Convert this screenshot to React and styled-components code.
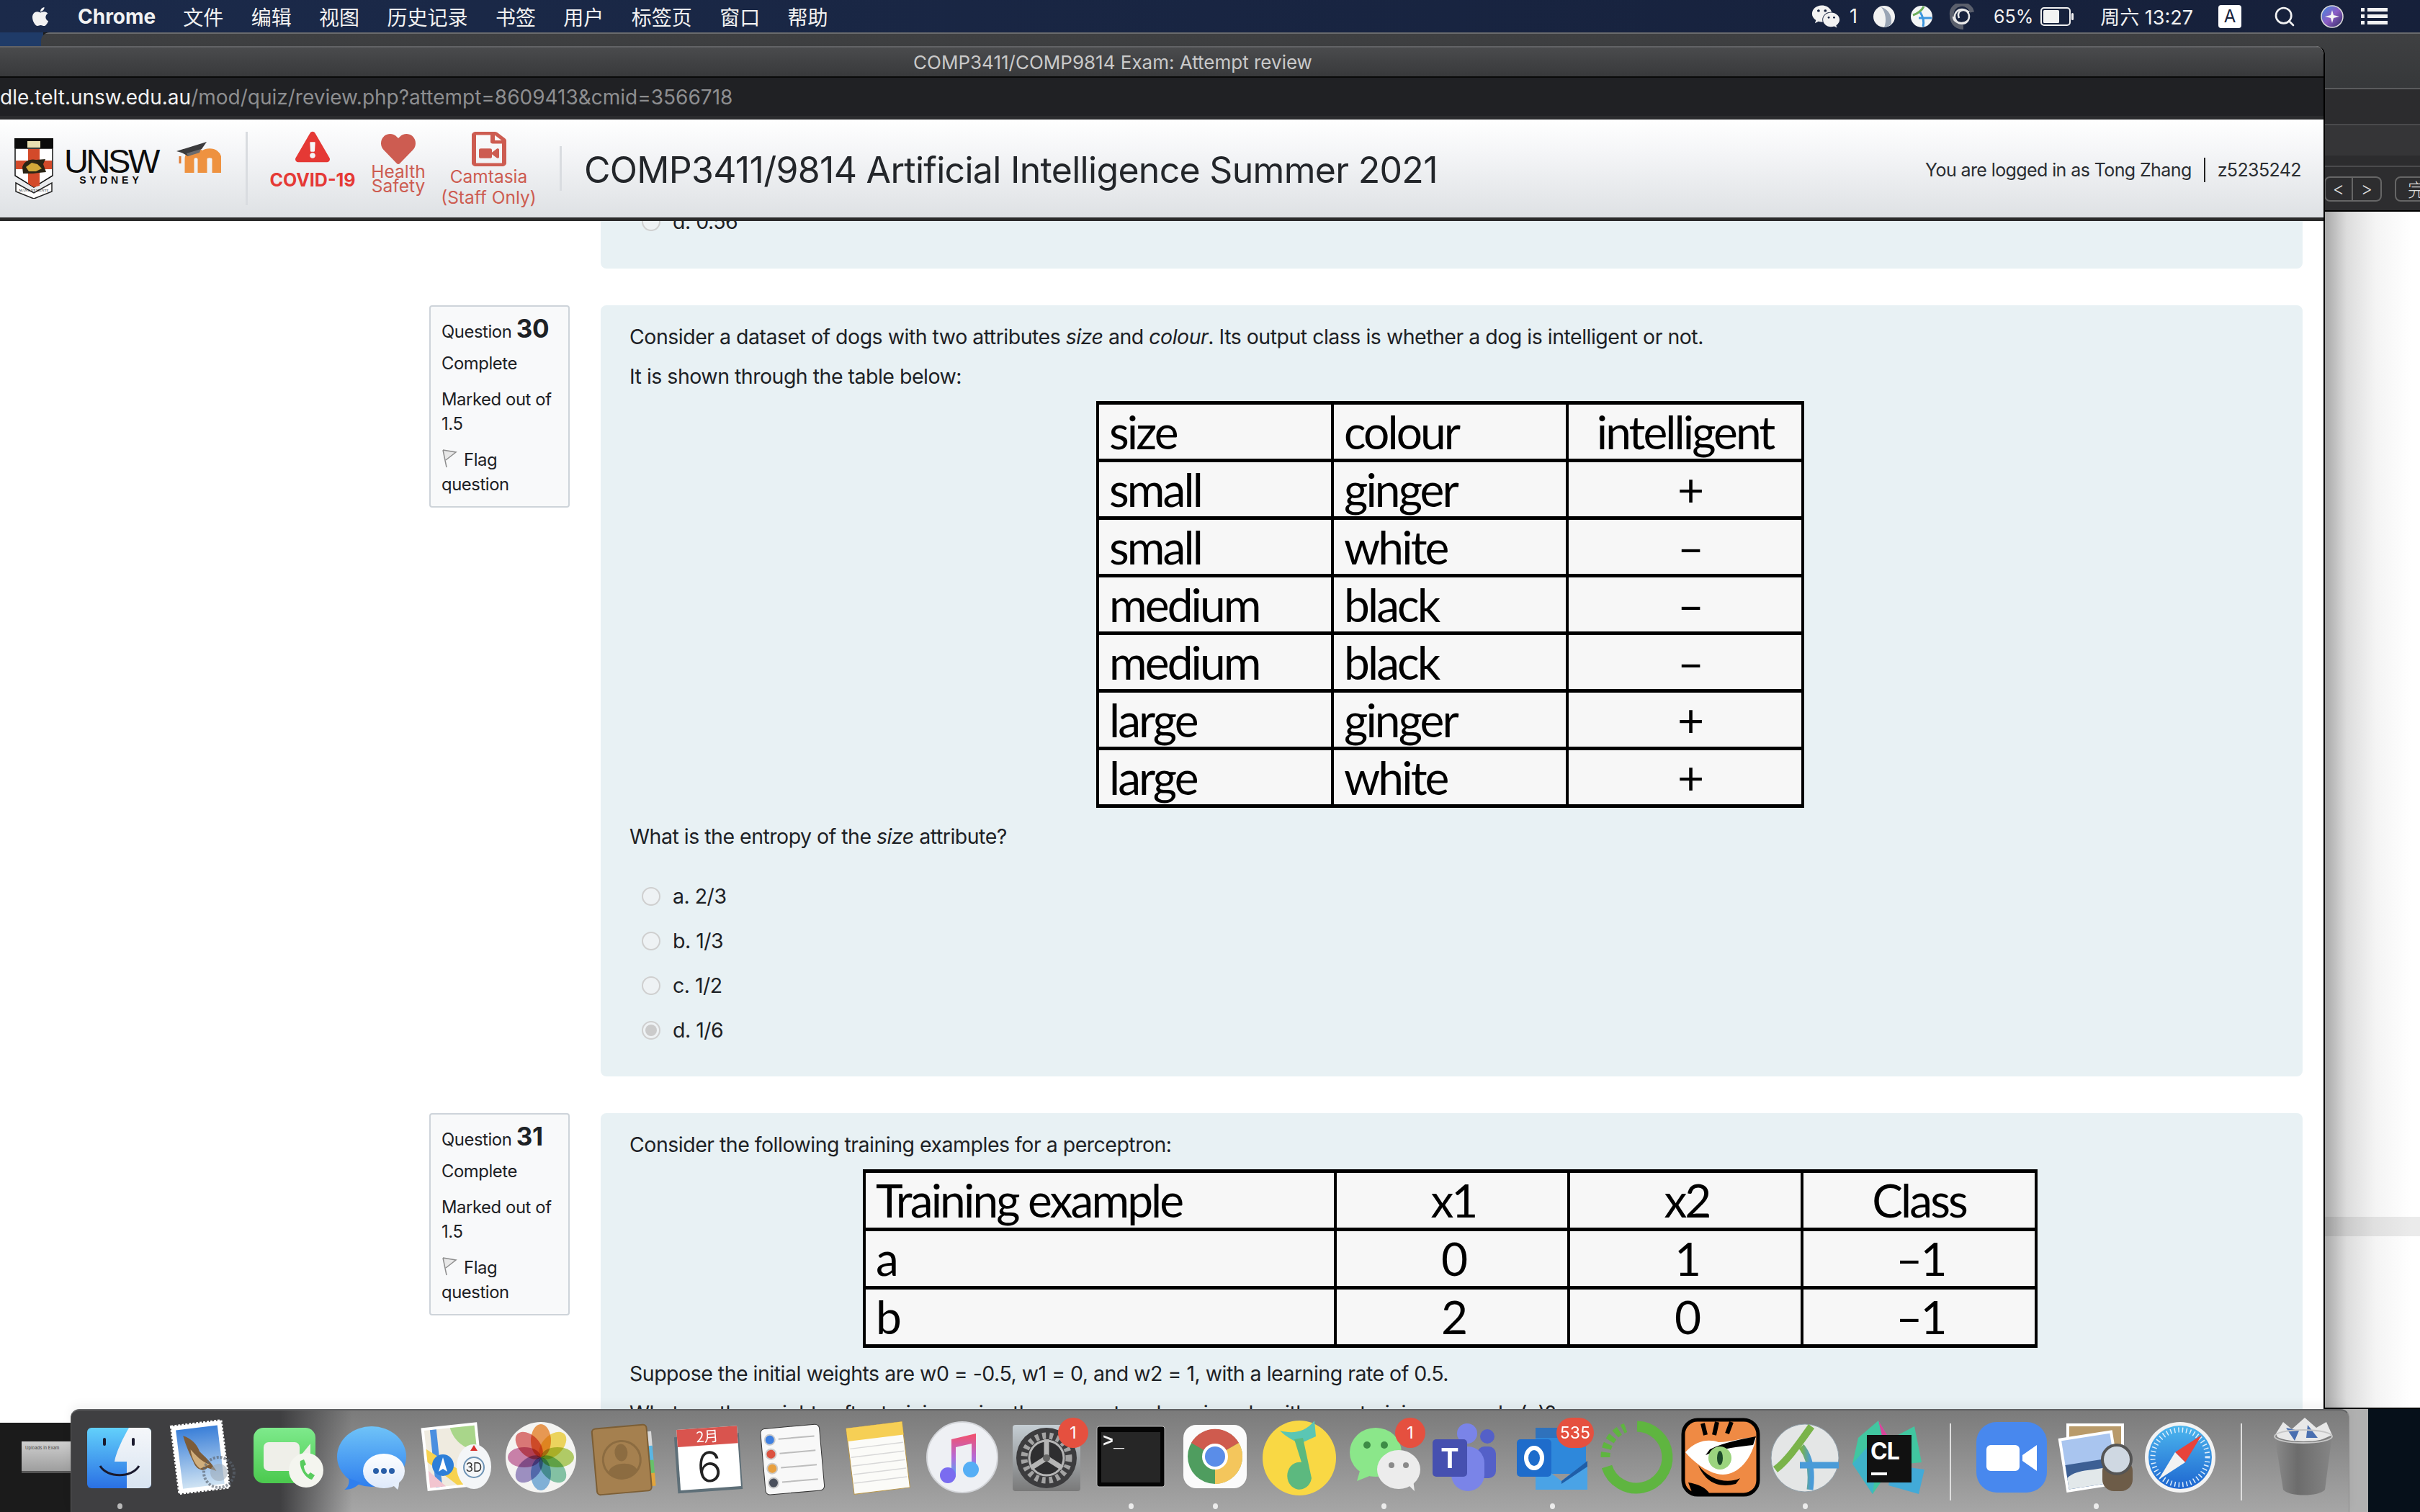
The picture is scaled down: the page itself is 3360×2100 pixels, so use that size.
import styled, { createGlobalStyle } from "styled-components";
import { FaApple, FaExclamationTriangle, FaHeart, FaRegFileVideo, FaWeixin } from "react-icons/fa";
import { FiSearch } from "react-icons/fi";

const PAGE_FONT = `Inter, "Noto Sans CJK SC", sans-serif`;

const GlobalStyle = createGlobalStyle`
  html, body { margin: 0; padding: 0; background: #06101a; }
  * { box-sizing: border-box; }
`;

const Screen = styled.div`
  position: relative;
  width: 3360px;
  height: 2100px;
  overflow: hidden;
  font-family: ${PAGE_FONT};
  background:
    linear-gradient(#1f3b68, #1f3b68) 0 45px / 60px 20px no-repeat,
    linear-gradient(90deg, #1b1b1b 0 98px, #b0b0b0 98px 3288px, #06101a 3288px);
`;

/* menu bar */
const MenuBar = styled.div`
  position: relative;
  z-index: 4;
  display: flex;
  align-items: center;
  height: 45px;
  padding: 0 45px 0 41px;
  background: linear-gradient(90deg, #1b2a4a, #16203a);
  color: #f2f2f2;
  font-size: 28px;
  font-family: Inter, "Noto Sans CJK SC", sans-serif;
`;

const AppName = styled.span`
  font-weight: 700;
  font-size: 28px;
  margin: 0 38px 0 37px;
`;

const MenuItem = styled.span`
  margin-right: 38.4px;
`;

const Tray = styled.div`
  display: flex;
  align-items: center;
  margin-left: auto;
`;

const TrayItem = styled.span`
  display: flex;
  align-items: center;
  margin-left: ${(p) => p.$ml || 0}px;
  font-size: ${(p) => p.$size || 26}px;
`;

const InputBadge = styled.span`
  display: flex;
  align-items: center;
  justify-content: center;
  width: 32px;
  height: 32px;
  margin-left: 35px;
  border-radius: 4px;
  background: #fff;
  color: #16203a;
  font-size: 24px;
`;

/* window behind */
const BackWindow = styled.div`
  position: absolute;
  left: 57px;
  top: 45px;
  right: 0;
  height: 1912px;
  display: flex;
  flex-direction: column;
  border-radius: 12px 0 0 0;
  overflow: hidden;
  border-bottom: 2px solid #000;
`;

const BackRow = styled.div`
  flex: none;
  height: ${(p) => p.$h}px;
  background: ${(p) => p.$bg};
  border-top: 2px solid ${(p) => p.$line || "transparent"};
`;

const BackToolbar = styled.div`
  flex: none;
  height: 64px;
  padding-left: 3170px;
  display: flex;
  align-items: center;
  background: #2d2d2f;
  border-top: 2px solid #4a4a4c;
  border-bottom: 2px solid #000;
`;

const Segment = styled.span`
  display: flex;
  align-items: center;
  justify-content: center;
  width: ${(p) => p.$w}px;
  height: 35px;
  border: 2px solid #666;
  border-left-width: ${(p) => (p.$joined ? 0 : 2)}px;
  border-radius: ${(p) => p.$radius};
  color: #ddd;
  font-size: 25px;
  font-weight: 300;
  flex: none;
`;

const DoneButton = styled(Segment)`
  margin-left: 18px;
  justify-content: flex-start;
  padding-left: 16px;
  white-space: nowrap;
`;

const BackPage = styled.div`
  position: relative;
  flex: 1;
  background: #fff linear-gradient(90deg, #a8a8a8 0, #dcdcdc 30px, #f4f4f4 70px, #fff 120px) right / 132px 100% no-repeat;
`;

const ShadeBand = styled.div`
  position: absolute;
  right: 0;
  width: 132px;
  top: 1396px;
  height: 27px;
  background: rgba(0, 0, 0, 0.08);
`;

/* main browser window */
const FrontWindow = styled.div`
  position: absolute;
  left: 0;
  top: 64px;
  width: 3228px;
  height: 1912px;
  display: flex;
  flex-direction: column;
  overflow: hidden;
  border-right: 2px solid #000;
  border-radius: 0 12px 0 0;
  background: #fff;
`;

const TitleBar = styled.div`
  flex: none;
  height: 44px;
  display: flex;
  align-items: center;
  justify-content: center;
  padding-right: 136px;
  background: linear-gradient(#4a4b4d, #38393b);
  border-top: 2px solid #626366;
  border-bottom: 2px solid #0a0a0a;
  color: #c9c9c9;
  font-size: 26px;
`;

const UrlBar = styled.div`
  flex: none;
  height: 58px;
  display: flex;
  align-items: center;
  background: #202124;
  border-bottom: 5px solid #2a2b2d;
  font-size: 28px;
  color: #8d8e90;
  white-space: nowrap;
`;

const UrlHost = styled.span`
  color: #f2f2f2;
`;

const PageHeader = styled.header`
  flex: none;
  height: 141px;
  display: flex;
  align-items: center;
  padding-left: 20px;
  padding-right: 31px;
  background: linear-gradient(#fff, #f4f5f7 35%, #dee1e4);
  border-bottom: 5px solid #2a2a2a;
`;

const WordMark = styled.div`
  display: flex;
  flex-direction: column;
  align-items: center;
  margin: -2px 0 0 14px;
  width: 132px;
  color: #0d0d0d;
  font-family: "Liberation Sans", sans-serif;
`;

const WordMarkMain = styled.span`
  font-size: 47px;
  line-height: 34px;
  letter-spacing: -3.4px;
`;

const WordMarkSub = styled.span`
  font-size: 14px;
  line-height: 18px;
  font-weight: 700;
  letter-spacing: 5px;
`;

const HeaderRule = styled.span`
  flex: none;
  width: 3px;
  height: ${(p) => p.$h}px;
  margin-left: ${(p) => p.$ml}px;
  background: #d9dce0;
`;

const HeaderLink = styled.a`
  flex: none;
  align-self: flex-start;
  display: flex;
  flex-direction: column;
  align-items: center;
  width: ${(p) => p.$w}px;
  margin: 17px 0 0 ${(p) => p.$ml}px;
  color: ${(p) => p.$color};
  font-size: ${(p) => p.$size}px;
  font-weight: ${(p) => p.$weight || 400};
  line-height: ${(p) => p.$lh}px;
  text-align: center;
  white-space: nowrap;
`;

const CovidIcon = styled(FaExclamationTriangle)`
  margin-top: -3px;
`;

const HeartIcon = styled(FaHeart)`
  margin-bottom: -3px;
`;

const CovidLabel = styled.span`
  margin-top: 7px;
`;

const HeadingTitle = styled.h1`
  margin: 4px 0 0 31px;
  font-size: 50px;
  font-weight: 400;
  letter-spacing: -0.7px;
  color: #23262a;
  white-space: nowrap;
`;

const UserMenu = styled.div`
  margin: 4px 0 0 auto;
  display: flex;
  align-items: center;
  font-size: 25px;
  letter-spacing: -0.6px;
  color: #2a2d31;
`;

const UserRule = styled.span`
  width: 2px;
  height: 34px;
  margin: 0 17px;
  background: #222;
`;

/* page body */
const ScrollArea = styled.main`
  flex: 1;
  overflow: hidden;
  padding-right: 29px;
  color: #1d2125;
  font-size: 28.5px;
  letter-spacing: -0.5px;
  line-height: 45px;
`;

const QuestionRow = styled.section`
  display: flex;
  align-items: flex-start;
  gap: 43px;
  padding-left: 596px;
  margin: ${(p) => p.$margin};
`;

const InfoBox = styled.aside`
  flex: none;
  width: 195px;
  height: 281px;
  padding: 13px 15px;
  background: #f8f9fa;
  border: 2px solid #ced4da;
  border-radius: 4px;
  font-size: 23.8px;
  letter-spacing: -0.4px;
  line-height: 34px;
`;

const InfoSpacer = styled.div`
  flex: none;
  width: 195px;
`;

const InfoNumberLine = styled.div`
  height: 49px;
  white-space: nowrap;
`;

const InfoNumber = styled.b`
  font-size: 35px;
  font-weight: 700;
`;

const InfoLine = styled.div`
  margin-bottom: ${(p) => p.$mb || 0}px;
  white-space: nowrap;
`;

const FlagMark = styled.svg`
  width: 22px;
  height: 26px;
  margin-right: 9px;
  vertical-align: -3px;
`;

const QuestionPanel = styled.div`
  flex: 1;
  height: ${(p) => p.$h}px;
  padding: ${(p) => p.$top ?? 21}px 44px 0 40px;
  background: #e8f1f4;
  border-radius: 8px;
  overflow: hidden;
`;

const Para = styled.p`
  margin: ${(p) => p.$mt || 0}px 0 0;
  white-space: nowrap;
`;

const Sheet = styled.table`
  border-collapse: collapse;
  table-layout: fixed;
  margin: 12px auto ${(p) => p.$mb}px;
  width: ${(p) => p.$w}px;
  background: #f7f7f7;
  color: #000;
  font-family: Lato, sans-serif;
  font-size: 64px;
  letter-spacing: -2.9px;
`;

const SheetCol = styled.col`
  width: ${(p) => p.$w}px;
`;

const Cell = styled.td`
  height: ${(p) => p.$h}px;
  padding: 0 0 0 ${(p) => p.$pad}px;
  border-top: 5px solid #000;
  border-bottom: 5px solid #000;
  border-left: 4px solid #000;
  border-right: 4px solid #000;
  line-height: 60px;
  text-align: ${(p) => (p.$center ? "center" : "left")};
`;

const Options = styled.div`
  margin: ${(p) => p.$mt}px 0 0 17px;
  display: flex;
  flex-direction: column;
  gap: 17px;
`;

const Option = styled.label`
  display: flex;
  align-items: center;
  gap: 17px;
`;

const Radio = styled.span`
  position: relative;
  flex: none;
  width: 26px;
  height: 26px;
  border-radius: 50%;
  border: 2px solid #cfcfcf;
  background: #eef2f4;
  &::after {
    content: "";
    display: ${(p) => (p.$checked ? "block" : "none")};
    position: absolute;
    inset: 3px;
    border-radius: 50%;
    background: #cbcbcb;
  }
`;

/* dock */
const Dock = styled.nav`
  position: absolute;
  z-index: 5;
  left: 98px;
  top: 1957px;
  width: 3164px;
  height: 143px;
  padding-left: 8px;
  display: flex;
  border-top: 2px solid #5f6062;
  border-left: 1px solid #5a5a5a;
  border-right: 1px solid #8a8a8a;
  border-radius: 12px 12px 0 0;
  box-shadow: 0 -6px 14px rgba(0, 0, 0, 0.05);
  background:
    linear-gradient(90deg, #3f3f41 0, #3f3f41 290px, rgba(70, 70, 72, 0) 390px),
    linear-gradient(#7b7b7b, #a6a6a6);
`;

const DockSlot = styled.div`
  position: relative;
  flex: none;
  width: 117px;
  padding-top: 10px;
  display: flex;
  justify-content: center;
`;

const DockSeparator = styled.div`
  flex: none;
  width: 53px;
  display: flex;
  justify-content: center;
  padding: 18px 0 16px;
  &::before {
    content: "";
    width: 2px;
    background: #dedede;
  }
`;

const RunDot = styled.span`
  position: absolute;
  left: 50%;
  bottom: 4px;
  width: 7px;
  height: 8px;
  margin-left: -3px;
  border-radius: 50%;
  background: ${(p) => (p.$dim ? "#b9b9b9" : "#ececec")};
`;

const CountBadge = styled.span`
  position: absolute;
  right: 0;
  top: 10px;
  min-width: 42px;
  height: 42px;
  padding: 0 5px;
  display: flex;
  align-items: center;
  justify-content: center;
  border-radius: 21px;
  background: #e5503f;
  color: #fff;
  font-size: 23px;
`;

const ScreenThumb = styled.div`
  position: absolute;
  left: 30px;
  top: 2002px;
  width: 68px;
  height: 44px;
  background: linear-gradient(#cfcfcf, #9e9e9e);
  border-bottom: 3px solid #555;
  color: #444;
  font-size: 6px;
  line-height: 7px;
  padding: 5px;
  overflow: hidden;
`;

const IconSvg = styled.svg.attrs({ viewBox: "0 0 110 110" })`
  width: 110px;
  height: 110px;
  display: block;
`;

/* dock icons */
const FinderIcon = () => (
  <IconSvg>
    <defs>
      <linearGradient id="fb" x1="0" y1="0" x2="0" y2="1"><stop offset="0" stopColor="#62d0fb" /><stop offset="1" stopColor="#2a70e4" /></linearGradient>
      <linearGradient id="fw" x1="0" y1="0" x2="0" y2="1"><stop offset="0" stopColor="#f5f7fa" /><stop offset="1" stopColor="#d8e4f1" /></linearGradient>
    </defs>
    <rect x="10" y="14" width="89" height="84" rx="6" fill="url(#fb)" />
    <path d="M68 14C60 28 50 48 48 61H65V98H93a6 6 0 0 0 6-6V20a6 6 0 0 0-6-6Z" fill="url(#fw)" />
    <rect x="32" y="28" width="4" height="11" rx="2" fill="#1a1a2e" />
    <rect x="72" y="28" width="4" height="11" rx="2" fill="#1a1a2e" />
    <path d="M28 67C38 84 72 84 82 67" stroke="#1a1a2e" strokeWidth="3" fill="none" />
  </IconSvg>
);

const MailIcon = () => (
  <IconSvg>
    <defs>
      <linearGradient id="ms" x1="0" y1="0" x2="0" y2="1"><stop offset="0" stopColor="#3a7fd8" /><stop offset="1" stopColor="#cfe3f3" /></linearGradient>
    </defs>
    <g transform="rotate(-7 55 55)">
      <rect x="15" y="7" width="70" height="94" fill="#fff" stroke="#fff" strokeWidth="3" strokeDasharray="3 2" />
      <rect x="21" y="13" width="58" height="82" fill="url(#ms)" />
      <path d="M30 22C40 26 48 36 50 46C56 54 64 62 70 76L58 70C52 76 42 70 40 60C36 48 32 36 30 22Z" fill="#7d5c38" />
      <path d="M38 42C44 50 50 60 62 66L48 70C42 64 38 54 38 42Z" fill="#d0ae7c" />
    </g>
    <circle cx="76" cy="76" r="21" fill="none" stroke="#5a6470" strokeWidth="4" strokeDasharray="3 2" opacity="0.65" />
    <circle cx="76" cy="76" r="12" fill="#9aa7b5" opacity="0.55" />
  </IconSvg>
);

const FaceTimeIcon = () => (
  <IconSvg>
    <defs>
      <linearGradient id="ft" x1="0" y1="0" x2="0" y2="1"><stop offset="0" stopColor="#7eea8c" /><stop offset="1" stopColor="#4bc94e" /></linearGradient>
    </defs>
    <rect x="7" y="14" width="86" height="77" rx="14" fill="url(#ft)" />
    <rect x="21" y="34" width="50" height="40" rx="7" fill="#efefe9" />
    <path d="M73 52L86 36V70Z" fill="#efefe9" />
    <ellipse cx="80" cy="73" rx="24" ry="24" fill="#f4f5ef" />
    <path d="M72 60C70 68 78 84 88 86L92 80L86 76L83 79C79 76 77 71 77 67L80 65L77 58Z" fill="#58cc5e" />
  </IconSvg>
);

const MessagesIcon = () => (
  <IconSvg>
    <defs>
      <linearGradient id="mg" x1="0" y1="0" x2="0" y2="1"><stop offset="0" stopColor="#6fc3f8" /><stop offset="1" stopColor="#2f7fee" /></linearGradient>
      <linearGradient id="mw" x1="0" y1="0" x2="0" y2="1"><stop offset="0" stopColor="#fdfeff" /><stop offset="1" stopColor="#dfeafb" /></linearGradient>
    </defs>
    <ellipse cx="54" cy="54" rx="48" ry="42" fill="url(#mg)" />
    <path d="M22 84C24 92 20 98 16 100C26 100 34 96 38 90Z" fill="#2f7fee" />
    <ellipse cx="71" cy="74" rx="29" ry="24" fill="url(#mw)" />
    <path d="M82 92C86 96 88 98 90 100C92 96 92 92 92 88Z" fill="#e6effb" />
    <circle cx="60" cy="74" r="4" fill="#2a5fa8" />
    <circle cx="71" cy="74" r="4" fill="#2a5fa8" />
    <circle cx="82" cy="74" r="4" fill="#2a5fa8" />
  </IconSvg>
);

const MapsIcon = () => (
  <IconSvg>
    <g transform="rotate(-6 50 55)">
      <rect x="10" y="10" width="78" height="88" fill="#fff" />
      <rect x="14" y="14" width="70" height="80" fill="#efebe0" />
      <path d="M50 14H84V48C68 46 54 34 50 14Z" fill="#a9d68a" />
      <path d="M22 14H31V94H22Z" fill="#4a8fe0" />
      <path d="M14 40L60 76V94H52L14 58Z" fill="#f7d24f" />
      <path d="M14 70L36 94H14Z" fill="#f2c4cf" />
    </g>
    <circle cx="36" cy="66" r="15" fill="#2d7fd8" />
    <path d="M36 55L42 75L36 71L30 75Z" fill="#fff" />
    <ellipse cx="79" cy="68" rx="24" ry="31" fill="#f4f6f8" />
    <circle cx="79" cy="69" r="14" fill="none" stroke="#6d93b5" strokeWidth="2" />
    <path d="M79 38L84 46H74Z" fill="#d8322c" />
    <text x="79" y="75" fontSize="17" textAnchor="middle" fill="#333" fontFamily="Inter, sans-serif">3D</text>
  </IconSvg>
);

const PETALS = ["#f08a30", "#f4d63f", "#a9c94a", "#6fbf9a", "#6ba8dc", "#8f7fc0", "#c76ba0", "#dd5f5f"];

const PhotosIcon = () => (
  <IconSvg>
    <circle cx="55" cy="55" r="49" fill="#f4f4f2" />
    {PETALS.map((c, i) => (
      <ellipse key={c} cx="55" cy="32" rx="14" ry="23" fill={c} opacity="0.82" style={{ mixBlendMode: "multiply" }} transform={`rotate(${i * 45} 55 55)`} />
    ))}
  </IconSvg>
);

const ContactsIcon = () => (
  <IconSvg>
    <g transform="rotate(-5 55 55)">
      <rect x="86" y="22" width="8" height="22" fill="#d8d8d8" />
      <rect x="86" y="42" width="8" height="22" fill="#5ab6e4" />
      <rect x="86" y="62" width="8" height="20" fill="#67c16b" />
      <rect x="86" y="80" width="8" height="18" fill="#e2a53c" />
      <rect x="12" y="12" width="76" height="92" rx="5" fill="#a5804f" stroke="#7c5e35" strokeWidth="2" />
      <circle cx="50" cy="58" r="26" fill="none" stroke="#8c6c41" strokeWidth="3" />
      <ellipse cx="50" cy="48" rx="9" ry="12" fill="#8c6c41" />
      <path d="M30 74C34 60 66 60 70 74C62 86 38 86 30 74Z" fill="#8c6c41" />
    </g>
  </IconSvg>
);

const CalendarIcon = () => (
  <IconSvg>
    <g transform="rotate(-4 55 55)">
      <rect x="8" y="24" width="90" height="78" fill="#5e6f78" />
      <rect x="12" y="14" width="84" height="84" fill="#fff" />
      <rect x="12" y="14" width="84" height="24" fill="#d9544e" />
      <text x="54" y="33" fontSize="20" textAnchor="middle" fill="#fff" fontFamily="'Noto Sans CJK SC', sans-serif">2月</text>
      <text x="54" y="89" fontSize="58" textAnchor="middle" fill="#222" fontFamily="Inter, sans-serif" fontWeight="300">6</text>
    </g>
  </IconSvg>
);

const ReminderLine = ({ y, color }) => (
  <>
    <circle cx="24" cy={y} r="7" fill={color} stroke="#ccc" strokeWidth="2" />
    <rect x="36" y={y - 1} width="50" height="2" fill="#bdbdbd" />
  </>
);

const RemindersIcon = () => (
  <IconSvg>
    <g transform="rotate(-5 55 55)">
      <rect x="12" y="12" width="82" height="92" rx="6" fill="#f8f8f8" stroke="#333" strokeWidth="1" />
      <ReminderLine y="28" color="#3e7fe0" />
      <ReminderLine y="48" color="#dc5240" />
      <ReminderLine y="68" color="#e8a040" />
      <ReminderLine y="88" color="#4a505c" />
    </g>
  </IconSvg>
);

const NotesIcon = () => (
  <IconSvg>
    <g transform="rotate(-7 55 55)">
      <rect x="16" y="10" width="78" height="92" fill="#fbfbf8" stroke="#b8964a" strokeWidth="1" />
      <rect x="16" y="10" width="78" height="18" fill="#f6cf55" />
      {[38, 50, 62, 74, 86].map((y) => (
        <rect key={y} x="18" y={y} width="74" height="1.5" fill="#d8d8d8" />
      ))}
    </g>
  </IconSvg>
);

const MusicIcon = () => (
  <IconSvg>
    <defs>
      <linearGradient id="mu" x1="0" y1="0" x2="0" y2="1"><stop offset="0" stopColor="#f4506a" /><stop offset="0.55" stopColor="#b46ad8" /><stop offset="1" stopColor="#4fa8f5" /></linearGradient>
    </defs>
    <circle cx="55" cy="55" r="49" fill="#eef0f4" stroke="#d2d4d8" strokeWidth="2" />
    <path d="M40 30L74 22V72H68V36L46 41V82H40Z" fill="url(#mu)" />
    <ellipse cx="35" cy="80" rx="11" ry="11" fill="#7a6cf0" />
    <ellipse cx="67" cy="72" rx="11" ry="11" fill="#55aef5" />
  </IconSvg>
);

const SystemIcon = () => (
  <IconSvg>
    <defs>
      <linearGradient id="sy" x1="0" y1="0" x2="0" y2="1"><stop offset="0" stopColor="#c5ced4" /><stop offset="1" stopColor="#797979" /></linearGradient>
    </defs>
    <rect x="8" y="10" width="94" height="92" rx="4" fill="url(#sy)" />
    <circle cx="55" cy="56" r="42" fill="#3c3c3e" />
    <circle cx="55" cy="56" r="31" fill="none" stroke="#a3a3a3" strokeWidth="9" strokeDasharray="5 5" />
    <circle cx="55" cy="56" r="24" fill="#2e2e30" stroke="#b5b5b5" strokeWidth="3" />
    <path d="M55 56V30M55 56L33 70M55 56L77 70" stroke="#b5b5b5" strokeWidth="7" />
    <circle cx="55" cy="56" r="5" fill="#666" />
  </IconSvg>
);

const TerminalIcon = () => (
  <IconSvg>
    <rect x="8" y="12" width="94" height="84" rx="3" fill="#050505" stroke="#b9b9b9" strokeWidth="1" />
    <rect x="14" y="20" width="82" height="70" fill="#262626" />
    <text x="16" y="40" fontSize="25" fontWeight="700" fill="#f2f2f2" fontFamily="Liberation Mono, monospace">&gt;_</text>
  </IconSvg>
);

const ChromeIcon = () => (
  <IconSvg>
    <rect x="6" y="10" width="88" height="88" rx="18" transform="translate(5 0)" fill="#fbfbfb" />
    <circle cx="55" cy="54" r="38" fill="#4f9d5f" />
    <path d="M55 54L88 35A38 38 0 0 0 22 35Z" fill="#cf5b4e" />
    <path d="M55 54L88 35A38 38 0 0 1 55 92Z" fill="#f4c65c" />
    <circle cx="55" cy="54" r="18" fill="#fff" />
    <circle cx="55" cy="54" r="14" fill="#5a8de8" />
  </IconSvg>
);

const QQMusicIcon = () => (
  <IconSvg>
    <ellipse cx="55" cy="56" rx="51" ry="52" fill="#f9d844" />
    <path d="M28 18C44 22 62 22 76 4L78 26L56 36C48 32 38 28 28 18Z" fill="#5ac6b4" />
    <path d="M48 30L60 28L72 84A17 19 0 1 1 58 62Z" fill="#5cb97f" />
  </IconSvg>
);

const WeChatIcon = () => (
  <IconSvg>
    <ellipse cx="44" cy="48" rx="36" ry="34" fill="#8be78a" />
    <path d="M22 74L18 88L38 80Z" fill="#8be78a" />
    <circle cx="32" cy="38" r="5" fill="#3d8c46" />
    <circle cx="56" cy="38" r="5" fill="#3d8c46" />
    <ellipse cx="76" cy="72" rx="30" ry="27" fill="#ececec" />
    <path d="M88 92L98 102L96 86Z" fill="#ececec" />
    <circle cx="66" cy="66" r="4" fill="#8a8a8a" />
    <circle cx="86" cy="66" r="4" fill="#8a8a8a" />
  </IconSvg>
);

const TeamsIcon = () => (
  <IconSvg>
    <circle cx="54" cy="22" r="14" fill="#7a84e8" />
    <circle cx="82" cy="26" r="10" fill="#5460c8" />
    <rect x="68" y="40" width="26" height="44" rx="10" fill="#5460c8" />
    <rect x="32" y="40" width="46" height="62" rx="23" fill="#7a84e8" />
    <rect x="6" y="30" width="48" height="52" rx="5" fill="#4650b0" />
    <text x="30" y="70" fontSize="38" fontWeight="700" textAnchor="middle" fill="#fff" fontFamily="Inter, sans-serif">T</text>
  </IconSvg>
);

const OutlookIcon = () => (
  <IconSvg>
    <rect x="32" y="14" width="44" height="40" fill="#1f6fc4" />
    <rect x="32" y="14" width="70" height="14" fill="#2f72bc" />
    <rect x="32" y="28" width="70" height="50" fill="#2e88db" />
    <path d="M32 60L68 88L104 60V100H32Z" fill="#4aa3e6" />
    <path d="M68 88L104 60V68L68 92Z" fill="#1f5ea8" />
    <rect x="6" y="30" width="48" height="52" rx="5" fill="#1e6ccb" />
    <ellipse cx="30" cy="56" rx="11" ry="14" fill="none" stroke="#fff" strokeWidth="6" />
  </IconSvg>
);

const RingIcon = () => (
  <IconSvg>
    <path d="M56 12A43 43 0 1 1 14 68" fill="none" stroke="#5fb540" strokeWidth="15" />
    <path d="M12 55A43 43 0 0 1 40 14" fill="none" stroke="#5fb540" strokeWidth="13" strokeDasharray="7 5" />
  </IconSvg>
);

const TigerIcon = () => (
  <IconSvg>
    <rect x="3" y="3" width="104" height="104" rx="20" fill="#ef8a44" stroke="#000" strokeWidth="5" />
    <path d="M6 48C22 30 40 30 52 34C72 34 88 26 104 28C98 60 76 84 50 78C34 74 18 62 6 48Z" fill="#fff" />
    <path d="M30 8L34 24M50 6L46 24M70 6L64 22" stroke="#000" strokeWidth="6" />
    <path d="M104 26C84 30 60 34 40 44L34 52C58 42 82 40 100 38Z" fill="#000" />
    <circle cx="54" cy="56" r="16" fill="#9bd47e" />
    <ellipse cx="54" cy="56" rx="4" ry="10" fill="#1c4a2a" />
    <path d="M24 66C40 88 66 92 82 84L76 92C52 98 34 90 24 66ZM10 90C22 92 34 96 40 106H16Z" fill="#000" />
  </IconSvg>
);

const AnyConnectIcon = () => (
  <IconSvg>
    <defs>
      <linearGradient id="ac" x1="0" y1="0" x2="1" y2="0"><stop offset="0" stopColor="#7ab34a" /><stop offset="1" stopColor="#4a9bd8" /></linearGradient>
    </defs>
    <circle cx="55" cy="56" r="47" fill="#e4e6e6" stroke="#8f9ea8" strokeWidth="1" />
    <path d="M14 72C30 60 44 40 64 12" fill="none" stroke="#7ab34a" strokeWidth="10" />
    <path d="M50 40C60 52 66 70 62 100" fill="none" stroke="url(#ac)" strokeWidth="9" />
    <path d="M48 66H102" stroke="#4a9bd8" strokeWidth="9" />
  </IconSvg>
);

const CLionIcon = () => (
  <IconSvg>
    <path d="M4 64L12 28L40 4L56 30L90 12L100 62L60 66L32 106Z" fill="#41c6a0" />
    <path d="M40 4L56 30L48 38Z" fill="#d9459b" />
    <path d="M4 64L34 30V90L32 106Z" fill="#3fb3c9" />
    <path d="M60 66L104 72L96 106L54 94Z" fill="#42aad8" />
    <rect x="24" y="24" width="62" height="66" fill="#111" />
    <text x="29" y="58" fontSize="32" fontWeight="700" fill="#fff" fontFamily="Inter, sans-serif" letterSpacing="-1">CL</text>
    <rect x="30" y="76" width="22" height="4" fill="#fff" />
  </IconSvg>
);

const ZoomIcon = () => (
  <IconSvg>
    <rect x="6" y="6" width="98" height="98" rx="28" fill="#4888ee" />
    <rect x="20" y="38" width="46" height="36" rx="6" fill="#fff" />
    <path d="M70 52L90 38V74L70 60Z" fill="#fff" />
  </IconSvg>
);

const PreviewIcon = () => (
  <IconSvg>
    <rect x="14" y="8" width="80" height="84" fill="#fff" />
    <rect x="18" y="12" width="72" height="70" fill="#b89a6a" />
    <g transform="rotate(-9 50 60)">
      <rect x="8" y="22" width="76" height="76" fill="#fff" />
      <rect x="12" y="26" width="68" height="68" fill="#a9c5ef" />
      <path d="M12 60H80V94H12Z" fill="#3c5f94" />
      <path d="M12 78C30 66 50 76 80 70V94H12Z" fill="#e2e8ea" />
    </g>
    <rect x="64" y="58" width="42" height="44" rx="16" fill="#6d5c48" />
    <circle cx="84" cy="58" r="20" fill="#cfd8e2" stroke="#555" strokeWidth="4" />
  </IconSvg>
);

const SafariIcon = () => (
  <IconSvg>
    <defs>
      <linearGradient id="sf" x1="0" y1="0" x2="0" y2="1"><stop offset="0" stopColor="#4cb6ee" /><stop offset="1" stopColor="#1e66d0" /></linearGradient>
    </defs>
    <circle cx="55" cy="55" r="49" fill="#f3f3f3" />
    <circle cx="55" cy="55" r="44" fill="url(#sf)" />
    <circle cx="55" cy="55" r="38" fill="none" stroke="#dfeefb" strokeWidth="7" strokeDasharray="1.5 4" />
    <path d="M85 24L48 48L62 62Z" fill="#e8433a" />
    <path d="M25 86L48 48L62 62Z" fill="#f2f2f2" />
  </IconSvg>
);

const TrashIcon = () => (
  <IconSvg>
    <defs>
      <linearGradient id="tr" x1="0" y1="0" x2="1" y2="0"><stop offset="0" stopColor="#8a8a8a" /><stop offset="0.4" stopColor="#6c6c6c" /><stop offset="1" stopColor="#858585" /></linearGradient>
    </defs>
    <path d="M18 22L28 6L40 16L58 0L74 14L88 6L96 24L60 40L24 36Z" fill="#e8e8e8" />
    <path d="M32 14L44 32L50 18ZM62 10L76 28L60 28Z" fill="#4a6fb0" />
    <path d="M16 24C28 36 84 36 96 24L86 100C78 110 36 110 28 100Z" fill="url(#tr)" />
    <ellipse cx="56" cy="26" rx="40" ry="9" fill="none" stroke="#c6c6c6" strokeWidth="2" />
  </IconSvg>
);

const CrestMark = () => (
  <svg width="54" height="84" viewBox="0 0 54 84" style={{ flex: "none" }}>
    <rect x="0" y="0" width="54" height="14" fill="#0b0b0b" />
    <rect x="18" y="4" width="18" height="9" fill="#e8dfb0" />
    <path d="M1 14H53V52L27 68L1 52Z" fill="#fff" stroke="#111" strokeWidth="1.5" />
    <path d="M19 15H35V31H52V43H35V66L27 68L19 63V43H2V31H19Z" fill="#d34a2a" />
    <path d="M11 40C13 32 22 28 30 30L43 29L40 36L44 47L34 48L26 49L12 49Z" fill="#2a2415" />
    <path d="M16 40L24 34L32 36L38 42L30 46L20 46Z" fill="#d2a93a" />
    <path d="M2 62L27 76L52 62L52 74L27 84L2 74Z" fill="#fff" stroke="#222" strokeWidth="1.5" />
    <text x="27" y="74" fontSize="5" textAnchor="middle" fontFamily="Liberation Serif, serif" fill="#111">MANU ET MENTE</text>
  </svg>
);

const MoodleMark = () => (
  <svg width="62" height="44" viewBox="0 0 62 44" style={{ flex: "none", margin: "-30px 0 0 25px" }}>
    <path d="M18 43V24C18 13 36 13 36 24V43M36 24C36 13 56 13 56 24V43" fill="none" stroke="#ee9240" strokeWidth="13" />
    <path d="M5 20V30" stroke="#e07c35" strokeWidth="3" />
    <path d="M0 13L42 0L35 10L16 20C10 16 5 14 0 13Z" fill="#3b3b3d" />
    <path d="M14 16L34 10L32 15L16 20Z" fill="#6b6b6d" />
  </svg>
);

const MENU_ITEMS = ["文件", "编辑", "视图", "历史记录", "书签", "用户", "标签页", "窗口", "帮助"];

const TrayGrey = () => (
  <svg width="32" height="32" viewBox="0 0 32 32">
    <circle cx="16" cy="16" r="15" fill="#f2f2f2" />
    <path d="M12 3C22 6 27 14 26 26A15 15 0 0 1 16 31C20 22 18 10 12 3Z" fill="#9aa5b5" />
  </svg>
);

const TrayGlobe = () => (
  <svg width="32" height="32" viewBox="0 0 32 32">
    <circle cx="16" cy="16" r="15" fill="#f4f6f6" />
    <path d="M4 14C10 12 16 8 19 2" fill="none" stroke="#6cae5a" strokeWidth="3" />
    <path d="M14 10C18 16 20 22 18 30M12 18H30" fill="none" stroke="#3c96de" strokeWidth="3" />
  </svg>
);

const TraySwirl = () => (
  <svg width="39" height="36" viewBox="0 0 39 36">
    <path d="M20 33C8 33 4 24 4 16A14 13 0 0 1 32 12" fill="none" stroke="#5a5f6c" strokeWidth="6" />
    <circle cx="18" cy="18" r="10" fill="none" stroke="#e8e8e8" strokeWidth="2.5" />
    <path d="M6 18C6 26 18 30 26 24M28 12C20 6 10 10 14 20" fill="none" stroke="#e8e8e8" strokeWidth="2.5" />
  </svg>
);

const Battery = () => (
  <svg width="46" height="26" viewBox="0 0 46 26">
    <rect x="1" y="1" width="40" height="24" rx="4" fill="none" stroke="#f2f2f2" strokeWidth="2" />
    <rect x="4" y="4" width="22" height="18" rx="1.5" fill="#f2f2f2" />
    <rect x="43" y="8" width="3" height="10" rx="1.5" fill="#f2f2f2" />
  </svg>
);

const Siri = () => (
  <svg width="32" height="32" viewBox="0 0 32 32">
    <defs>
      <linearGradient id="si" x1="0" y1="0" x2="1" y2="1"><stop offset="0" stopColor="#3f8ce0" /><stop offset="0.5" stopColor="#8c5cc4" /><stop offset="1" stopColor="#2a2a5c" /></linearGradient>
    </defs>
    <circle cx="16" cy="16" r="15" fill="url(#si)" stroke="#dcdcdc" strokeWidth="1.5" />
    <path d="M16 7L18 14L26 16L18 18L16 25L14 18L6 16L14 14Z" fill="#f4f4f4" />
  </svg>
);

const ListGlyph = () => (
  <svg width="37" height="24" viewBox="0 0 37 24" fill="#f2f2f2">
    {[0, 9, 18].map((y) => (
      <g key={y}>
        <rect x="0" y={y} width="5" height="5" />
        <rect x="9" y={y} width="28" height="5" />
      </g>
    ))}
  </svg>
);

const FlagGlyph = () => (
  <FlagMark viewBox="0 0 22 26">
    <path d="M2 1L7 25M2 1L20 4L6 15" fill="#e8e8e8" stroke="#8d8d8d" strokeWidth="1.5" />
  </FlagMark>
);

const QuestionInfo = ({ number }) => (
  <InfoBox>
    <InfoNumberLine>
      Question <InfoNumber>{number}</InfoNumber>
    </InfoNumberLine>
    <InfoLine $mb={16}>Complete</InfoLine>
    <InfoLine>Marked out of</InfoLine>
    <InfoLine $mb={16}>1.5</InfoLine>
    <InfoLine>
      <FlagGlyph />
      Flag
    </InfoLine>
    <InfoLine>question</InfoLine>
  </InfoBox>
);

// the signs in the picture sit a little right of the column centre
const cellPadding = (text, center) => {
  if (!center) return 14;
  if (text === "+" || text === "–") return 13;
  return text.length <= 2 ? 4 : 0;
};

const DataTable = ({ width, rowHeight, cols, rows, leftCols, bottom }) => (
  <Sheet $w={width} $mb={bottom}>
    <colgroup>
      {cols.map((w, i) => (
        <SheetCol key={`${i + 1}`} $w={w} />
      ))}
    </colgroup>
    <tbody>
      {rows.map((row, r) => (
        <tr key={`${r + 1}`}>
          {row.map((text, c) => (
            <Cell key={`${c + 1}`} $h={rowHeight} $center={c >= leftCols} $pad={cellPadding(text, c >= leftCols)}>
              {text}
            </Cell>
          ))}
        </tr>
      ))}
    </tbody>
  </Sheet>
);

const DOGS = [
  ["size", "colour", "intelligent"],
  ["small", "ginger", "+"],
  ["small", "white", "–"],
  ["medium", "black", "–"],
  ["medium", "black", "–"],
  ["large", "ginger", "+"],
  ["large", "white", "+"],
];

const TRAINING = [
  ["Training example", "x1", "x2", "Class"],
  ["a", "0", "1", "–1"],
  ["b", "2", "0", "–1"],
];

const DOCK_ICONS = [
  { key: "finder", Icon: FinderIcon, dot: "dim" },
  { key: "mail", Icon: MailIcon },
  { key: "facetime", Icon: FaceTimeIcon },
  { key: "messages", Icon: MessagesIcon },
  { key: "maps", Icon: MapsIcon },
  { key: "photos", Icon: PhotosIcon },
  { key: "contacts", Icon: ContactsIcon },
  { key: "calendar", Icon: CalendarIcon },
  { key: "reminders", Icon: RemindersIcon },
  { key: "notes", Icon: NotesIcon },
  { key: "music", Icon: MusicIcon },
  { key: "system", Icon: SystemIcon, badge: "1" },
  { key: "terminal", Icon: TerminalIcon, dot: "on" },
  { key: "chrome", Icon: ChromeIcon, dot: "on" },
  { key: "qq", Icon: QQMusicIcon },
  { key: "wechat", Icon: WeChatIcon, badge: "1", dot: "on" },
  { key: "teams", Icon: TeamsIcon },
  { key: "outlook", Icon: OutlookIcon, badge: "535", dot: "on" },
  { key: "ring", Icon: RingIcon },
  { key: "tiger", Icon: TigerIcon },
  { key: "anyconnect", Icon: AnyConnectIcon, dot: "on" },
  { key: "clion", Icon: CLionIcon },
  { key: "sep1" },
  { key: "zoom", Icon: ZoomIcon },
  { key: "preview", Icon: PreviewIcon, dot: "on" },
  { key: "safari", Icon: SafariIcon },
  { key: "sep2" },
  { key: "trash", Icon: TrashIcon },
];

const App = () => {
  return (
    <Screen>
      <GlobalStyle />
      <MenuBar>
        <FaApple size={30} />
        <AppName>Chrome</AppName>
        {MENU_ITEMS.map((item) => (
          <MenuItem key={item}>{item}</MenuItem>
        ))}
        <Tray>
          <FaWeixin size={40} />
          <TrayItem $ml={13} $size={27}>1</TrayItem>
          <TrayItem $ml={21}>
            <TrayGrey />
          </TrayItem>
          <TrayItem $ml={20}>
            <TrayGlobe />
          </TrayItem>
          <TrayItem $ml={22}>
            <TraySwirl />
          </TrayItem>
          <TrayItem $ml={23} $size={25}>65%</TrayItem>
          <TrayItem $ml={10}>
            <Battery />
          </TrayItem>
          <TrayItem $ml={37} $size={27}>周六 13:27</TrayItem>
          <InputBadge>A</InputBadge>
          <TrayItem $ml={44}>
            <FiSearch size={32} />
          </TrayItem>
          <TrayItem $ml={34}>
            <Siri />
          </TrayItem>
          <TrayItem $ml={24}>
            <ListGlyph />
          </TrayItem>
        </Tray>
      </MenuBar>

      <BackWindow>
        <BackRow $h={77} $bg="linear-gradient(#3f4042, #36383a)" $line="#6a6b6d" />
        <BackRow $h={50} $bg="#2c2c2e" $line="#5a5b5d" />
        <BackRow $h={44} $bg="#353537" $line="#4a4a4c" />
        <BackRow $h={14} $bg="#2c2c2e" />
        <BackToolbar>
          <Segment $w={40} $radius="8px 0 0 8px">&lt;</Segment>
          <Segment $w={40} $joined $radius="0 8px 8px 0">&gt;</Segment>
          <DoneButton $w={70} $radius="8px 0 0 8px">完成</DoneButton>
        </BackToolbar>
        <BackPage>
          <ShadeBand />
        </BackPage>
      </BackWindow>

      <FrontWindow>
        <TitleBar>COMP3411/COMP9814 Exam: Attempt review</TitleBar>
        <UrlBar>
          <UrlHost>dle.telt.unsw.edu.au</UrlHost>/mod/quiz/review.php?attempt=8609413&amp;cmid=3566718
        </UrlBar>
        <PageHeader>
          <CrestMark />
          <WordMark>
            <WordMarkMain>UNSW</WordMarkMain>
            <WordMarkSub>SYDNEY</WordMarkSub>
          </WordMark>
          <MoodleMark />
          <HeaderRule $h={102} $ml={34} />
          <HeaderLink $w={118} $ml={31} $color="#e53935" $size={25} $weight={700} $lh={30}>
            <CovidIcon size={48} />
            <CovidLabel>COVID-19</CovidLabel>
          </HeaderLink>
          <HeaderLink $w={70} $ml={25} $color="#cd5c51" $size={24.5} $lh={20}>
            <HeartIcon size={48} />
            Health
            <br />
            Safety
          </HeaderLink>
          <HeaderLink $w={127} $ml={27} $color="#cd5c51" $size={24.5} $lh={29}>
            <FaRegFileVideo size={48} preserveAspectRatio="none" />
            Camtasia
            <br />
            (Staff Only)
          </HeaderLink>
          <HeaderRule $h={62} $ml={35} />
          <HeadingTitle>COMP3411/9814 Artificial Intelligence Summer 2021</HeadingTitle>
          <UserMenu>
            You are logged in as Tong Zhang
            <UserRule />
            z5235242
          </UserMenu>
        </PageHeader>

        <ScrollArea>
          <QuestionRow $margin="-60px 0 51px">
            <InfoSpacer />
            <QuestionPanel $h={126} $top={38}>
              <Options $mt={0}>
                <Option>
                  <Radio />
                  d. 0.56
                </Option>
              </Options>
            </QuestionPanel>
          </QuestionRow>

          <QuestionRow $margin="0 0 51px">
            <QuestionInfo number="30" />
            <QuestionPanel $h={1071}>
              <Para>
                Consider a dataset of dogs with two attributes <em>size</em> and <em>colour</em>. Its output class is whether a dog is intelligent or not.
              </Para>
              <Para $mt={10}>It is shown through the table below:</Para>
              <DataTable width={979} rowHeight={80} cols={[326, 326, 327]} rows={DOGS} leftCols={2} bottom={17} />
              <Para>
                What is the entropy of the <em>size</em> attribute?
              </Para>
              <Options $mt={38}>
                <Option><Radio />a. 2/3</Option>
                <Option><Radio />b. 1/3</Option>
                <Option><Radio />c. 1/2</Option>
                <Option><Radio $checked />d. 1/6</Option>
              </Options>
            </QuestionPanel>
          </QuestionRow>

          <QuestionRow>
            <QuestionInfo number="31" />
            <QuestionPanel $h={500}>
              <Para>Consider the following training examples for a perceptron:</Para>
              <DataTable width={1627} rowHeight={81} cols={[654, 324, 324, 325]} rows={TRAINING} leftCols={1} bottom={13} />
              <Para>Suppose the initial weights are w0 = -0.5, w1 = 0, and w2 = 1, with a learning rate of 0.5.</Para>
              <Para $mt={10}>What are the weights after training using the perceptron learning algorithm on training example (a)?</Para>
            </QuestionPanel>
          </QuestionRow>
        </ScrollArea>
      </FrontWindow>

      <ScreenThumb>Uploads in Exam</ScreenThumb>

      <Dock>
        {DOCK_ICONS.map(({ key, Icon, badge, dot }) =>
          Icon ? (
            <DockSlot key={key}>
              <Icon />
              {badge && <CountBadge>{badge}</CountBadge>}
              {dot && <RunDot $dim={dot === "dim"} />}
            </DockSlot>
          ) : (
            <DockSeparator key={key} />
          )
        )}
      </Dock>
    </Screen>
  );
};

export default App;
